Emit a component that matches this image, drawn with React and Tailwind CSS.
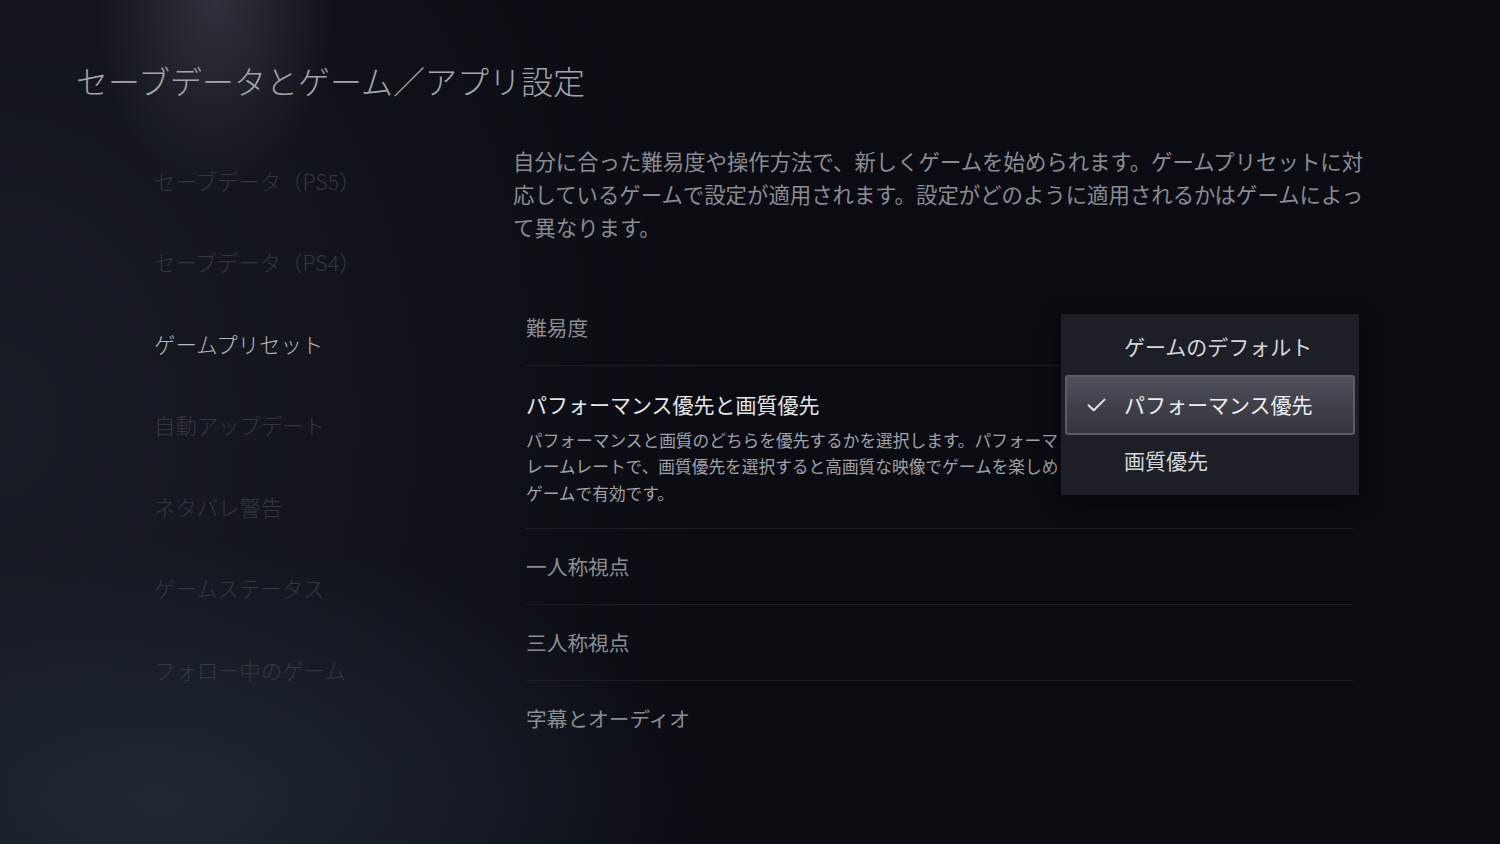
const font = { fontFamily: '"Noto Sans CJK JP", "Noto Sans", sans-serif' };

const navItems = [
  { label: "セーブデータ（PS5）" },
  { label: "セーブデータ（PS4）" },
  { label: "ゲームプリセット", active: true },
  { label: "自動アップデート" },
  { label: "ネタバレ警告" },
  { label: "ゲームステータス" },
  { label: "フォロー中のゲーム" },
];

function Check() {
  return (
    <svg width="19" height="14" viewBox="0 0 19 14" fill="none" className="shrink-0">
      <path d="M1.5 7.2 L6.8 12.3 L17.5 1.6" stroke="#e4e5e8" strokeWidth="2" strokeLinecap="round" strokeLinejoin="round" />
    </svg>
  );
}

function Dropdown() {
  return (
    <div className="absolute left-[535px] top-[24px] w-[298px] h-[181px] bg-[#1c1f26] p-[4px] flex flex-col shadow-[0_6px_20px_rgba(0,0,0,0.45)]">
      <div className="h-[57px] flex items-center pl-[59px] text-[21px] text-[#d6d7da]">ゲームのデフォルト</div>
      <div className="h-[60px] flex items-center pl-[20px] gap-[18px] rounded-[3px] border-2 border-[#5a5d66] bg-[linear-gradient(180deg,#4f525b_0%,#3e4048_55%,#34363d_100%)] text-[21px] text-[#eceef0]">
        <Check />
        <span>パフォーマンス優先</span>
      </div>
      <div className="h-[52px] flex items-center pl-[59px] text-[21px] text-[#d6d7da]">画質優先</div>
    </div>
  );
}

function Row({ label, last }) {
  return (
    <div className={`h-[76px] flex items-center text-[20.7px] text-[#8b8d93] ${last ? "" : "border-b border-[#1c1f26]"}`}>
      {label}
    </div>
  );
}

export default function App() {
  return (
    <div
      style={font}
      className="w-full h-[844px] overflow-hidden bg-[#0a0c12] bg-[radial-gradient(ellipse_120px_190px_at_215px_0px,rgba(78,80,90,0.5),transparent),radial-gradient(ellipse_560px_260px_at_160px_800px,rgba(34,42,54,0.9),transparent),radial-gradient(ellipse_700px_900px_at_0px_420px,rgba(26,30,38,0.9),transparent)]"
    >
      <h1 className="pl-[76px] pt-[56px] h-[104px] text-[32px] leading-[48px] font-light text-[#a3a5aa]">
        セーブデータとゲーム／アプリ設定
      </h1>

      <div className="flex pt-[36px]">
        {/* left menu */}
        <nav className="w-[513px] pl-[154px] flex flex-col">
          {navItems.map((it) => (
            <div
              key={it.label}
              className={`h-[81.5px] flex items-center text-[21.4px] font-light ${it.active ? "text-[#b7b9be]" : "text-[#343841]"}`}
            >
              {it.label}
            </div>
          ))}
        </nav>

        {/* content */}
        <div className="w-[860px] pt-[4px]">
          <p className="text-[21.4px] leading-[33px] text-[#8a8c92] whitespace-nowrap">
            <span className="block">自分に合った難易度や操作方法で、新しくゲームを始められます。ゲームプリセットに対</span>
            <span className="block">応しているゲームで設定が適用されます。設定がどのように適用されるかはゲームによっ</span>
            <span className="block">て異なります。</span>
          </p>

          <div className="relative ml-[13px] mr-[20px] mt-[47px]">
            <Row label="難易度" />
            <div className="h-[163px] pt-[23px] border-b border-[#1c1f26]">
              <div className="text-[21px] leading-[30px] text-[#e4e5e7]">パフォーマンス優先と画質優先</div>
              {/* the rest of the text runs under the open menu */}
              <div className="w-[535px] overflow-hidden mt-[7.5px] text-[16.7px] leading-[26.5px] text-[#a0a2a7] whitespace-nowrap">
                <span className="block">パフォーマンスと画質のどちらを優先するかを選択します。パフォーマンス優先を選択するとより高いフ</span>
                <span className="block">レームレートで、画質優先を選択すると高画質な映像でゲームを楽しめます。この設定は対応している</span>
                <span className="block">ゲームで有効です。</span>
              </div>
            </div>
            <Row label="一人称視点" />
            <Row label="三人称視点" />
            <Row label="字幕とオーディオ" last />
            <Dropdown />
          </div>
        </div>
      </div>
    </div>
  );
}
